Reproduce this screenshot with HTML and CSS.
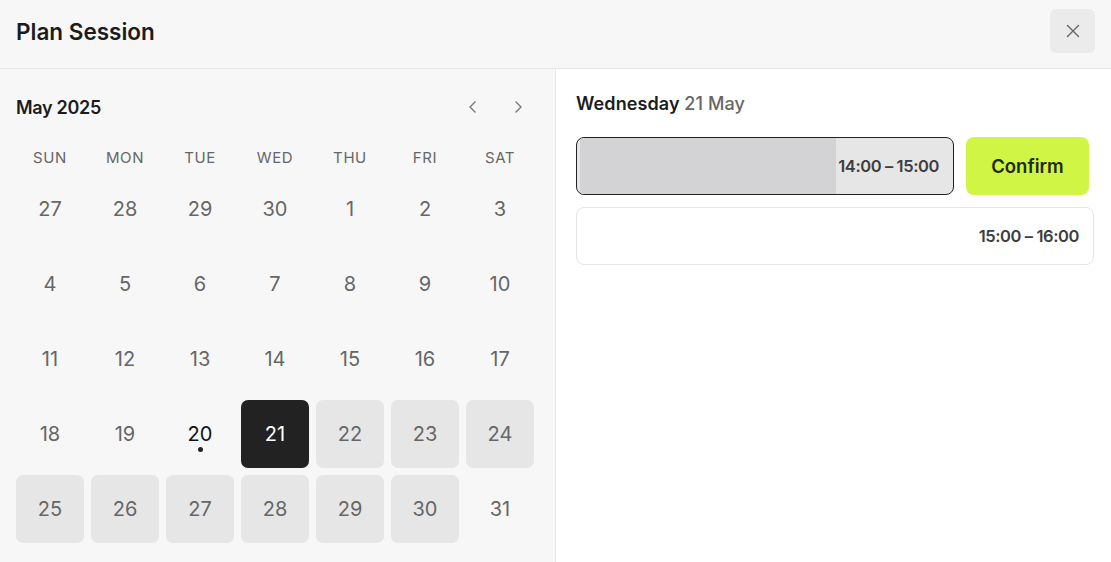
FILE: index.html
```html
<!DOCTYPE html>
<html lang="en">
<head>
<meta charset="utf-8">
<title>Plan Session</title>
<link rel="stylesheet" href="styles.css">
</head>
<body>
<div class="modal">
  <header class="head">
    <h1 class="title">Plan Session</h1>
    <button class="close" aria-label="Close">
      <svg width="16" height="16" viewBox="0 0 16 16"><path d="M2.5 2.5 13.5 13.5M13.5 2.5 2.5 13.5" stroke="#666" stroke-width="1.4" fill="none" stroke-linecap="round"/></svg>
    </button>
  </header>
  <div class="body">
    <section class="cal">
      <div class="cal-head">
        <div class="month">May 2025</div>
        <div class="nav">
          <button class="arrow" aria-label="Previous"><svg width="14" height="14" viewBox="0 0 14 14"><path d="M9 2 4 7l5 5" stroke="#777" stroke-width="1.4" fill="none" stroke-linecap="round" stroke-linejoin="round"/></svg></button>
          <button class="arrow" aria-label="Next"><svg width="14" height="14" viewBox="0 0 14 14"><path d="M5 2l5 5-5 5" stroke="#777" stroke-width="1.4" fill="none" stroke-linecap="round" stroke-linejoin="round"/></svg></button>
        </div>
      </div>
      <div class="grid wk">
        <div>SUN</div><div>MON</div><div>TUE</div><div>WED</div><div>THU</div><div>FRI</div><div>SAT</div>
      </div>
      <div class="grid days">
        <div class="d">27</div><div class="d">28</div><div class="d">29</div><div class="d">30</div><div class="d">1</div><div class="d">2</div><div class="d">3</div>
        <div class="d">4</div><div class="d">5</div><div class="d">6</div><div class="d">7</div><div class="d">8</div><div class="d">9</div><div class="d">10</div>
        <div class="d">11</div><div class="d">12</div><div class="d">13</div><div class="d">14</div><div class="d">15</div><div class="d">16</div><div class="d">17</div>
        <div class="d">18</div><div class="d">19</div><div class="d today">20<span class="dot"></span></div><div class="d sel">21</div><div class="d avail">22</div><div class="d avail">23</div><div class="d avail">24</div>
        <div class="d avail">25</div><div class="d avail">26</div><div class="d avail">27</div><div class="d avail">28</div><div class="d avail">29</div><div class="d avail">30</div><div class="d">31</div>
      </div>
    </section>
    <section class="slots">
      <h2 class="date">Wednesday <span class="muted">21 May</span></h2>
      <div class="row first">
        <div class="slot active">
          <div class="fill" style="width:68%"></div>
          <span class="time">14:00 – 15:00</span>
        </div>
        <button class="confirm">Confirm</button>
      </div>
      <div class="row">
        <div class="slot"><span class="time">15:00 – 16:00</span></div>
      </div>
    </section>
  </div>
</div>
</body>
</html>
```

FILE: styles.css
```css
* { box-sizing: border-box; }
html, body { margin: 0; padding: 0; }
body {
  font-family: Inter, "Noto Sans", sans-serif;
  background: #fff;
  color: #1c1c1c;
  width: 1111px;
  height: 562px;
  overflow: hidden;
}
button { font-family: inherit; border: 0; cursor: pointer; }
.modal { display: flex; flex-direction: column; height: 562px; }
.head {
  height: 69px;
  background: #f7f7f7;
  border-bottom: 1px solid #e8e8e8;
  display: flex;
  align-items: center;
  justify-content: space-between;
  padding: 0 16px 0 16px;
  flex: none;
}
.title {
  margin: 0;
  font-size: 22.5px;
  font-weight: 600;
  letter-spacing: 0;
  color: #1c1c1c;
  margin-top: -6px;
}
.close {
  width: 45px;
  height: 44px;
  border-radius: 6px;
  background: #ebebeb;
  display: flex;
  align-items: center;
  justify-content: center;
  padding: 0;
  margin-top: -7px;
}
.body { display: flex; flex: 1; }
.cal {
  width: 556px;
  background: #f7f7f7;
  border-right: 1px solid #e8e8e8;
  padding: 23px 21px 0 16px;
}
.cal-head {
  display: flex;
  align-items: center;
  justify-content: space-between;
  height: 30px;
}
.month { font-size: 18px; font-weight: 600; letter-spacing: -0.3px; color: #1c1c1c; }
.nav { display: flex; gap: 17px; margin-right: 2px; }
.arrow {
  background: transparent;
  width: 28px; height: 28px;
  padding: 0;
  display: flex; align-items: center; justify-content: center;
}
.grid {
  display: grid;
  grid-template-columns: repeat(7, 68px);
  column-gap: 7px;
}
.wk {
  margin-top: 25px;
  height: 20px;
  align-items: center;
}
.wk div {
  text-align: center;
  font-size: 15px;
  color: #666;
  letter-spacing: 0.6px;
}
.days { margin-top: 8px; row-gap: 7px; grid-auto-rows: 68px; }
.d {
  position: relative;
  display: flex;
  align-items: center;
  justify-content: center;
  font-size: 20px;
  color: #666;
  border-radius: 7px;
}
.d.avail { background: #e6e6e6; }
.d.sel { background: #222; color: #fff; }
.d.today { color: #111; }
.dot {
  position: absolute;
  left: 50%;
  top: 47px;
  width: 5px; height: 5px;
  margin-left: -2.5px;
  border-radius: 50%;
  background: #222;
}
.slots {
  flex: 1;
  padding: 23px 17px 0 20px;
  background: #fff;
}
.date {
  margin: 0;
  font-size: 18px;
  font-weight: 600;
  letter-spacing: 0.1px;
  color: #1c1c1c;
  height: 24px;
  line-height: 24px;
}
.muted { color: #666; font-weight: 500; }
.row { display: flex; gap: 12px; margin-top: 12px; }
.row.first { margin-top: 21px; margin-right: 5px; }
.slot {
  position: relative;
  flex: 1;
  height: 58px;
  border: 1px solid #e6e6e6;
  border-radius: 8px;
  background: #fff;
  display: flex;
  align-items: center;
  justify-content: flex-end;
  padding: 0 14px;
  overflow: hidden;
}
.slot.active {
  background: #e6e6e6;
  border-color: #222;
}
.fill {
  position: absolute;
  left: 3px; top: 0; bottom: 0;
  background: #d3d3d5;
}
.time {
  position: relative;
  font-size: 16.5px;
  font-weight: 600;
  letter-spacing: -0.4px;
  color: #3d3d3d;
}
.confirm {
  width: 123px;
  height: 58px;
  border-radius: 8px;
  background: #d0f545;
  color: #1f2a10;
  font-size: 18.5px;
  font-weight: 600;
  letter-spacing: 0;
  flex: none;
}
```
